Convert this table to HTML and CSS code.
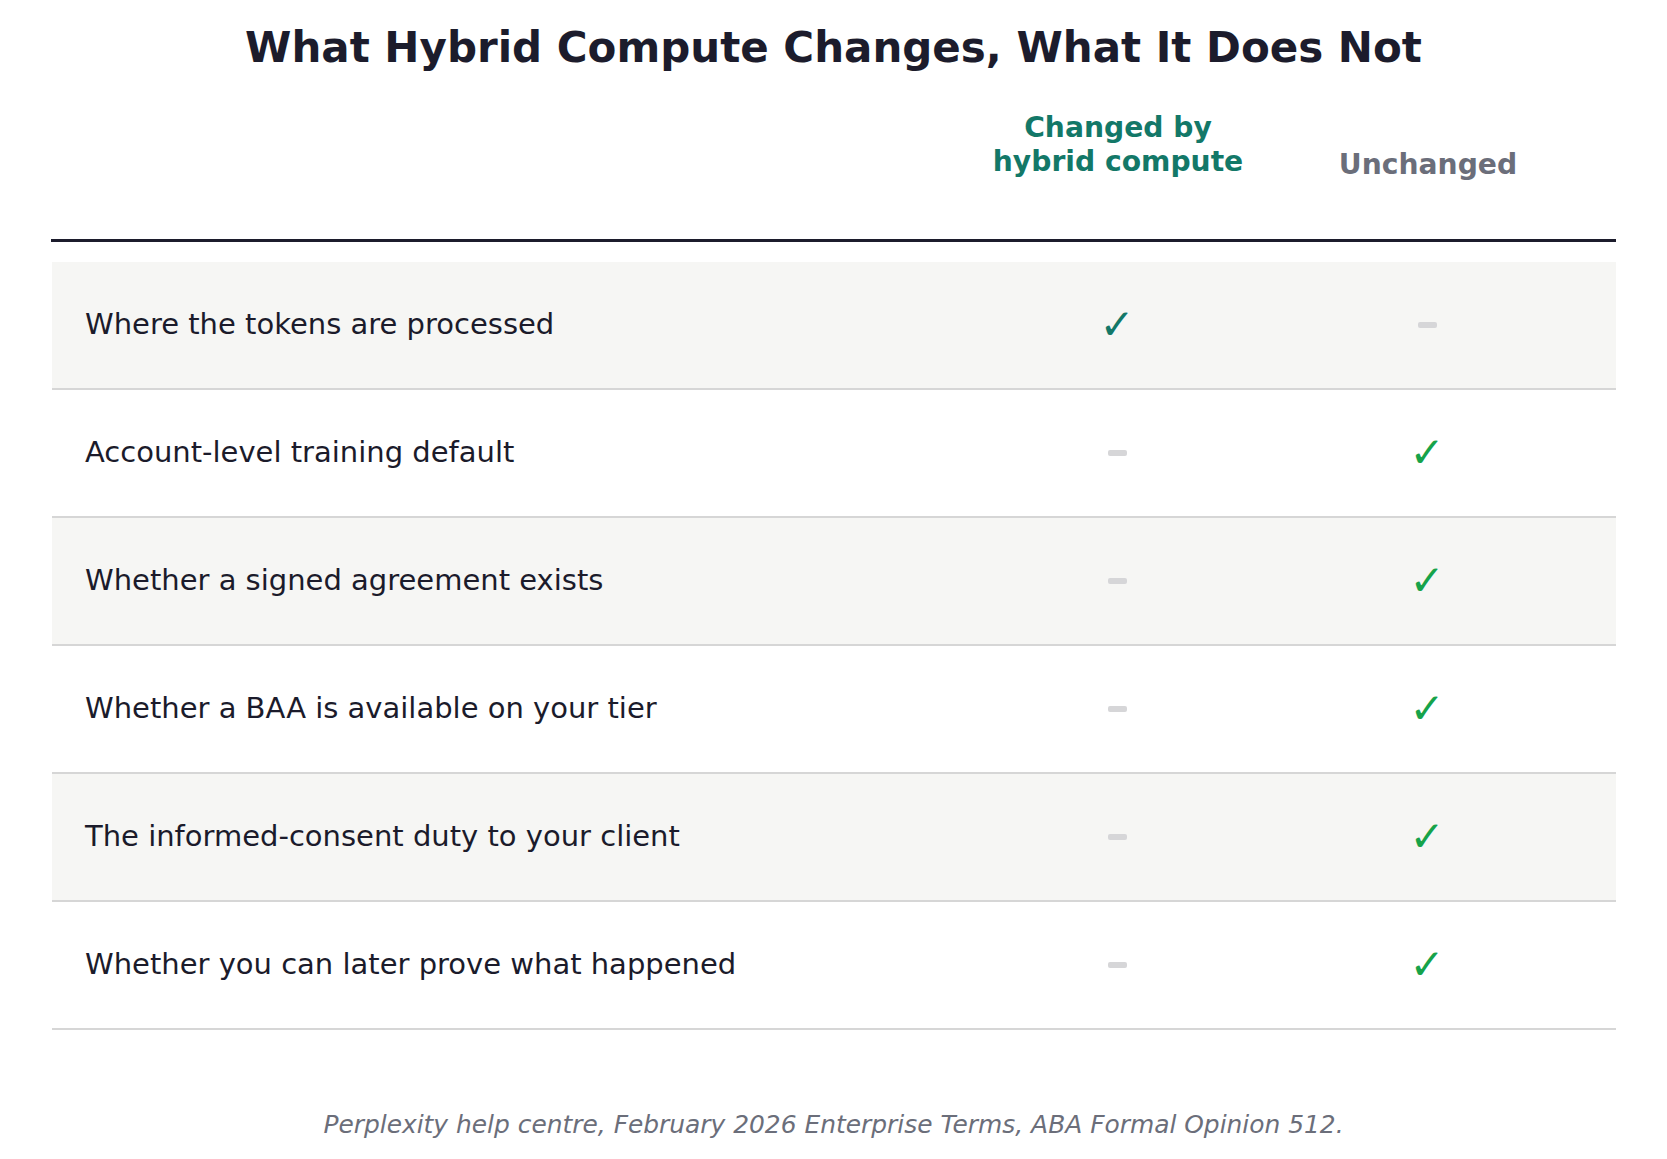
FILE: index.html
```html
<!DOCTYPE html>
<html lang="en">
<head>
<meta charset="utf-8">
<title>What Hybrid Compute Changes, What It Does Not</title>
<link rel="stylesheet" href="styles.css">
</head>
<body>
<main class="page">
  <h1 class="title">What Hybrid Compute Changes, What It Does Not</h1>
  <div class="table">
    <div class="head">
      <div class="head-cell"></div>
      <div class="head-cell head-changed">Changed by<br>hybrid compute</div>
      <div class="head-cell head-unchanged">Unchanged</div>
    </div>
    <div class="row alt">
      <div class="label">Where the tokens are processed</div>
      <div class="mark"><span class="check check-teal">✓</span></div>
      <div class="mark"><span class="dash"></span></div>
    </div>
    <div class="row">
      <div class="label">Account-level training default</div>
      <div class="mark"><span class="dash"></span></div>
      <div class="mark"><span class="check check-green">✓</span></div>
    </div>
    <div class="row alt">
      <div class="label">Whether a signed agreement exists</div>
      <div class="mark"><span class="dash"></span></div>
      <div class="mark"><span class="check check-green">✓</span></div>
    </div>
    <div class="row">
      <div class="label">Whether a BAA is available on your tier</div>
      <div class="mark"><span class="dash"></span></div>
      <div class="mark"><span class="check check-green">✓</span></div>
    </div>
    <div class="row alt">
      <div class="label">The informed-consent duty to your client</div>
      <div class="mark"><span class="dash"></span></div>
      <div class="mark"><span class="check check-green">✓</span></div>
    </div>
    <div class="row">
      <div class="label">Whether you can later prove what happened</div>
      <div class="mark"><span class="dash"></span></div>
      <div class="mark"><span class="check check-green">✓</span></div>
    </div>
  </div>
  <p class="source">Perplexity help centre, February 2026 Enterprise Terms, ABA Formal Opinion 512.</p>
</main>
</body>
</html>
```

FILE: styles.css
```css
* { box-sizing: border-box; }

html, body {
  margin: 0;
  padding: 0;
  background: #ffffff;
}

body {
  font-family: "DejaVu Sans", "Liberation Sans", sans-serif;
  color: #1b1b2b;
}

.page {
  width: 1667px;
  padding: 24px 51px 0;
}

.title {
  margin: 0;
  font-size: 42px;
  line-height: 48px;
  font-weight: 700;
  text-align: center;
  color: #1c1c2c;
}

.table {
  margin-top: 39px;
}

.head {
  display: grid;
  grid-template-columns: 1fr 310px 310px;
  padding: 0 33px 0 36px;
  border-bottom: 3px solid #1c1c2c;
  margin-bottom: 20px;
}

.head-cell {
  align-self: end;
  text-align: center;
  font-weight: 700;
  font-size: 28.2px;
  line-height: 34px;
  padding-bottom: 60px;
}

.head-changed {
  color: #137868;
}

.head-unchanged {
  color: #6b6e7a;
  padding-bottom: 57px;
}

.row {
  display: grid;
  grid-template-columns: 1fr 310px 310px;
  align-items: center;
  height: 128px;
  margin: 0 0 0 1px;
  padding: 0 34px 0 33px;
  border-bottom: 2px solid #d6d6d6;
}

.row.alt {
  background: #f6f6f4;
}

.label {
  font-size: 29px;
  line-height: 34px;
  color: #1b1b2b;
  padding-bottom: 2px;
}

.mark {
  display: flex;
  justify-content: center;
  align-items: center;
}

.check {
  font-size: 42px;
  line-height: 44px;
}

.check-teal { color: #137868; }
.check-green { color: #16a34a; }

.dash {
  display: block;
  width: 19px;
  height: 6px;
  border-radius: 2px;
  background: #d6d6d8;
}

.source {
  margin: 79px 0 0;
  text-align: center;
  font-style: italic;
  font-size: 24.9px;
  line-height: 32px;
  color: #6b6e7a;
}
```
